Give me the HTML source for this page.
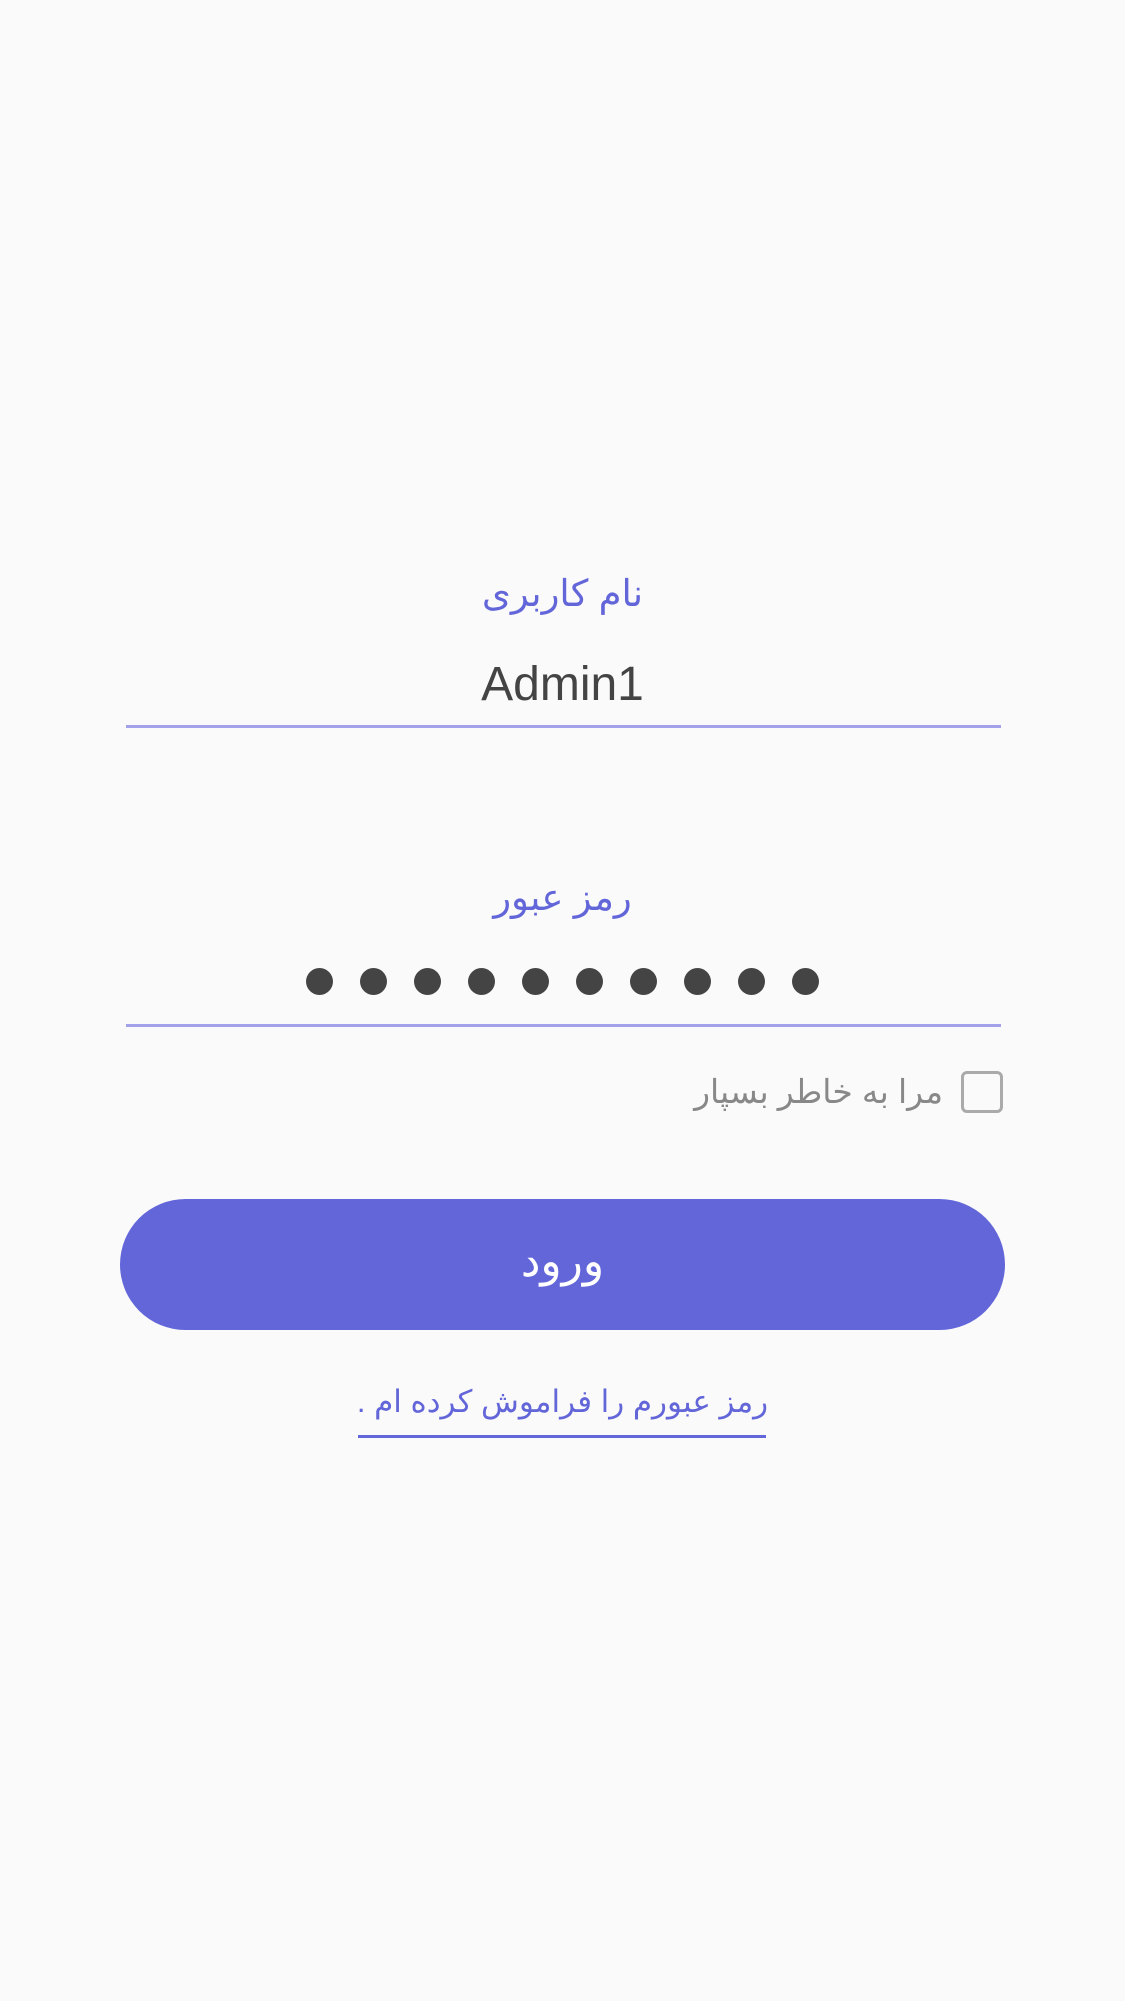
<!DOCTYPE html>
<html><head><meta charset="utf-8"><style>
html,body{margin:0;padding:0;}
body{width:1125px;height:2001px;background:#fafafa;position:relative;overflow:hidden;font-family:"Liberation Sans","Noto Sans CJK SC",sans-serif;}
.abs{position:absolute;}
.lbl{left:0;width:1125px;text-align:center;color:#6366d9;font-size:37px;direction:rtl;}
.line{left:126px;width:875px;height:3px;background:#a3a1ea;}
.dot{width:27px;height:27px;border-radius:50%;background:#444;top:968px;}
</style></head><body>
<div class="abs lbl" style="top:572px;">نام کاربری</div>
<div class="abs" style="left:0;width:1125px;text-align:center;top:657px;font-size:48px;color:#444;">Admin1</div>
<div class="abs line" style="top:725px;"></div>
<div class="abs lbl" style="top:876px;">رمز عبور</div>
<div class="abs dot" style="left:306px"></div>
<div class="abs dot" style="left:360px"></div>
<div class="abs dot" style="left:414px"></div>
<div class="abs dot" style="left:468px"></div>
<div class="abs dot" style="left:522px"></div>
<div class="abs dot" style="left:576px"></div>
<div class="abs dot" style="left:630px"></div>
<div class="abs dot" style="left:684px"></div>
<div class="abs dot" style="left:738px"></div>
<div class="abs dot" style="left:792px"></div>
<div class="abs line" style="top:1024px;"></div>
<div class="abs" style="left:961px;top:1071px;width:42px;height:42px;border:3px solid #aaa;border-radius:6px;box-sizing:border-box;"></div>
<div class="abs" style="right:182px;top:1072px;font-size:33px;color:#888;direction:rtl;">مرا به خاطر بسپار</div>
<div class="abs" style="left:120px;top:1199px;width:885px;height:131px;border-radius:66px;background:#6366d9;color:#fff;font-size:44px;text-align:center;line-height:125px;">ورود</div>
<div class="abs" style="left:0;top:1384px;width:1125px;text-align:center;color:#6366d9;font-size:31px;direction:rtl;white-space:nowrap;">رمز عبورم را فراموش کرده ام .</div>
<div class="abs" style="left:358px;top:1435px;width:408px;height:3px;background:#6366d9;"></div>
</body></html>
